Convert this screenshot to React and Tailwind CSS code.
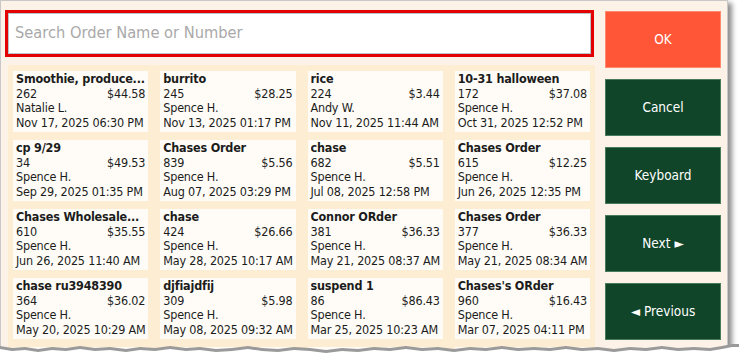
import React from 'react';

const orders = [
  { name: 'Smoothie, produce...', num: '262', total: '$44.58', who: 'Natalie L.', date: 'Nov 17, 2025 06:30 PM' },
  { name: 'burrito', num: '245', total: '$28.25', who: 'Spence H.', date: 'Nov 13, 2025 01:17 PM' },
  { name: 'rice', num: '224', total: '$3.44', who: 'Andy W.', date: 'Nov 11, 2025 11:44 AM' },
  { name: '10-31 halloween', num: '172', total: '$37.08', who: 'Spence H.', date: 'Oct 31, 2025 12:52 PM' },
  { name: 'cp 9/29', num: '34', total: '$49.53', who: 'Spence H.', date: 'Sep 29, 2025 01:35 PM' },
  { name: 'Chases Order', num: '839', total: '$5.56', who: 'Spence H.', date: 'Aug 07, 2025 03:29 PM' },
  { name: 'chase', num: '682', total: '$5.51', who: 'Spence H.', date: 'Jul 08, 2025 12:58 PM' },
  { name: 'Chases Order', num: '615', total: '$12.25', who: 'Spence H.', date: 'Jun 26, 2025 12:35 PM' },
  { name: 'Chases Wholesale...', num: '610', total: '$35.55', who: 'Spence H.', date: 'Jun 26, 2025 11:40 AM' },
  { name: 'chase', num: '424', total: '$26.66', who: 'Spence H.', date: 'May 28, 2025 10:17 AM' },
  { name: 'Connor ORder', num: '381', total: '$36.33', who: 'Spence H.', date: 'May 21, 2025 08:37 AM' },
  { name: 'Chases Order', num: '377', total: '$36.33', who: 'Spence H.', date: 'May 21, 2025 08:34 AM' },
  { name: 'chase ru3948390', num: '364', total: '$36.02', who: 'Spence H.', date: 'May 20, 2025 10:29 AM' },
  { name: 'djfiajdfij', num: '309', total: '$5.98', who: 'Spence H.', date: 'May 08, 2025 09:32 AM' },
  { name: 'suspend 1', num: '86', total: '$86.43', who: 'Spence H.', date: 'Mar 25, 2025 10:23 AM' },
  { name: "Chases's ORder", num: '960', total: '$16.43', who: 'Spence H.', date: 'Mar 07, 2025 04:11 PM' },
];

const buttons = [
  { label: 'OK', cls: 'bg-[#ff5637] border-[#ff8a70]' },
  { label: 'Cancel', cls: 'bg-[#10452a] border-[#4a7a5c]' },
  { label: 'Keyboard', cls: 'bg-[#10452a] border-[#4a7a5c]' },
  { label: 'Next ►', cls: 'bg-[#10452a] border-[#4a7a5c]' },
  { label: '◄ Previous', cls: 'bg-[#10452a] border-[#4a7a5c]' },
];

function OrderCard({ o }) {
  return (
    <div className="bg-[#fffcf7] h-[61px] px-[3px] pt-[1px] text-[12.5px] tracking-[-0.2px] leading-[14.7px] text-[#1c1c1c]">
      <div className="font-bold text-[12.5px] truncate">{o.name}</div>
      <div className="flex justify-between">
        <span>{o.num}</span>
        <span>{o.total}</span>
      </div>
      <div>{o.who}</div>
      <div className="whitespace-nowrap">{o.date}</div>
    </div>
  );
}

export default function App() {
  return (
    <div className="relative w-[739px] h-[363px] bg-white overflow-hidden" style={{ fontFamily: '"DejaVu Sans Condensed", "DejaVu Sans", sans-serif' }}>
      <div className="w-[728px] h-[360px] bg-[#fdf2e7] border border-[#c8c8c8] shadow-[4px_3px_5px_rgba(0,0,0,0.45)] flex gap-[11px] pl-[4px] pt-[9px]">
        {/* left side */}
        <div className="w-[589px] flex flex-col gap-[8px]">
          <div className="h-[47px] shrink-0 border-[3px] border-[#e30000] bg-white">
            <div className="h-full border border-[#b9c3cc] flex items-center pl-[6px] text-[16.3px] text-[#a9a9a9]">
              Search Order Name or Number
            </div>
          </div>
          <div className="ml-[3px] w-[587px] shrink-0 overflow-hidden bg-[#fdeed3] px-[5px] pt-[6px] grid grid-cols-4 gap-x-[12px] gap-y-[8px] content-start h-[292px]">
            {orders.map((o, i) => (
              <OrderCard key={i} o={o} />
            ))}
            <div className="bg-[#fffcf7] h-[61px]"></div>
            <div className="bg-[#fffcf7] h-[61px]"></div>
            <div className="bg-[#fffcf7] h-[61px]"></div>
            <div className="bg-[#fffcf7] h-[61px]"></div>
          </div>
        </div>
        {/* buttons */}
        <div className="w-[116px] flex flex-col gap-[11px] pt-[1px]">
          {buttons.map((b) => (
            <div key={b.label} className={`h-[57px] shrink-0 border flex items-center justify-center text-white text-[13.5px] ${b.cls}`}>
              {b.label}
            </div>
          ))}
        </div>
      </div>
      {/* torn bottom edge */}
      <svg className="absolute left-0 top-[336px]" width="739" height="27" viewBox="0 0 739 27">
        <path
          d="M0 10 L12 12 L25 11 L38 13 L52 11 L66 12 L80 10 L95 12 L110 11 L126 13 L140 11 L155 12 L170 10 L186 12 L200 11 L216 13 L232 12 L248 10 L262 12 L278 13 L294 11 L310 12 L326 14 L342 12 L358 13 L374 11 L390 12 L406 10 L422 12 L438 11 L454 13 L470 11 L486 12 L502 10 L518 12 L534 11 L550 12 L566 10 L582 12 L598 11 L614 13 L630 11 L646 12 L662 10 L678 12 L694 11 L710 12 L722 10 L732 8 L739 8 L739 27 L0 27 Z"
          fill="#9a9a9a"
        />
        <path
          d="M0 13 L12 15 L25 14 L38 16 L52 14 L66 15 L80 13 L95 15 L110 14 L126 16 L140 14 L155 15 L170 13 L186 15 L200 14 L216 16 L232 15 L248 13 L262 15 L278 16 L294 14 L310 15 L326 17 L342 15 L358 16 L374 14 L390 15 L406 13 L422 15 L438 14 L454 16 L470 14 L486 15 L502 13 L518 15 L534 14 L550 15 L566 13 L582 15 L598 14 L614 16 L630 14 L646 15 L662 13 L678 15 L694 14 L710 15 L722 13 L732 11 L739 11 L739 27 L0 27 Z"
          fill="#ffffff"
        />
      </svg>
    </div>
  );
}
